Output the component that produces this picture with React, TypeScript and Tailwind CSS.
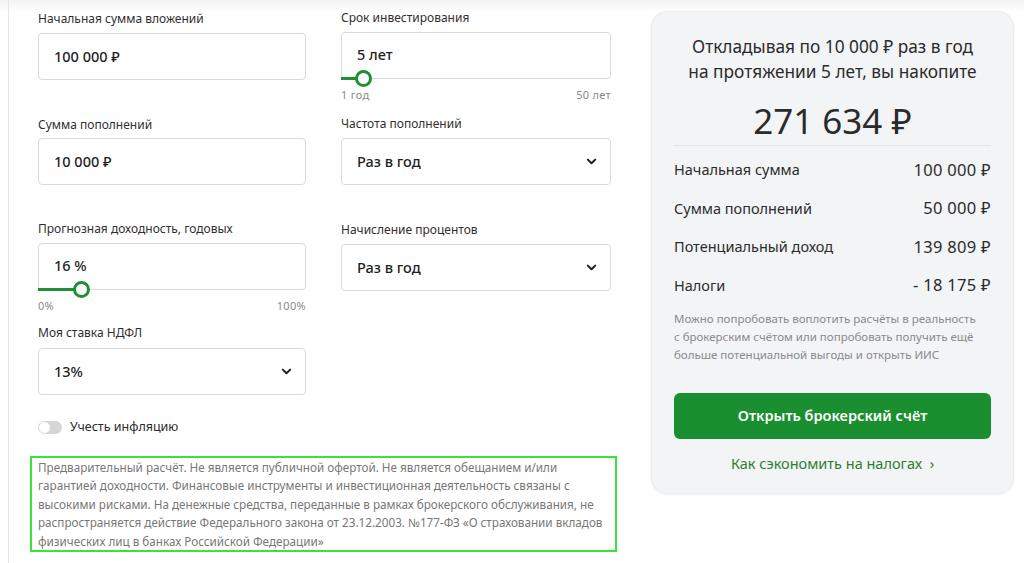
import React from "react";

const Chevron = () => (
  <svg width="11" height="7" viewBox="0 0 11 7" fill="none">
    <path d="M1.8 1.6l3.7 3.7 3.7-3.7" stroke="#1f1f1f" strokeWidth="2" strokeLinecap="round" strokeLinejoin="round" />
  </svg>
);

const Label = ({ children }: { children: React.ReactNode }) => (
  <div className="text-[12px] leading-[16px] text-[#2f2f2f]">{children}</div>
);

const InputBox = ({ value, h = "h-[47px]" }: { value: string; h?: string }) => (
  <div className={`${h} rounded-[4px] border border-[#dadada] bg-white flex items-center pl-[15px] text-[14.5px] font-medium text-[#1f1f1f]`}>
    {value}
  </div>
);

const SelectBox = ({ value, h = "h-[47px]" }: { value: string; h?: string }) => (
  <div className={`${h} rounded-[4px] border border-[#dadada] bg-white flex items-center justify-between pl-[15px] pr-[13px] text-[14.5px] font-medium text-[#1f1f1f]`}>
    <span>{value}</span>
    <Chevron />
  </div>
);

const SliderInput = ({ value, thumb, min, max }: { value: string; thumb: number; min: string; max: string }) => (
  <div>
    <div className="relative h-[47px] rounded-[4px] border border-[#dadada] bg-white flex items-center pl-[15px] pb-[2px] text-[14.5px] font-medium text-[#1f1f1f]">
      {value}
      <div className="absolute left-[-1px] bottom-[-2px] h-[3px] bg-[#1e8f32]" style={{ width: thumb }} />
      <div
        className="absolute bottom-[-9px] w-[17px] h-[17px] rounded-full border-[3px] border-[#1e8f32] bg-white"
        style={{ left: thumb - 9 }}
      />
    </div>
    <div className="flex justify-between text-[11px] leading-[14px] text-[#8a8a8a] mt-[9px] tracking-[0.3px]">
      <span>{min}</span>
      <span>{max}</span>
    </div>
  </div>
);

const Row = ({ label, value }: { label: string; value: string }) => (
  <div className="flex justify-between items-center h-[38.5px]">
    <span className="text-[14.5px] text-[#2b2b2b]">{label}</span>
    <span className="text-[16.5px] text-[#2b2b2b] tracking-[0.3px]">{value}</span>
  </div>
);

export default function App() {
  return (
    <div
      className="w-[1024px] h-[563px] overflow-hidden flex bg-[linear-gradient(to_bottom,#f3f3f3,#ffffff_12px)]"
      style={{ fontFamily: '"Noto Sans", "Open Sans", sans-serif' }}
    >
      <div className="ml-[8px] border-l border-[#e6e6e6] h-full pl-[29px] w-[603px] shrink-0">
        <div className="flex gap-[35px]">
          {/* Column 1 */}
          <div className="w-[268px] flex flex-col">
            <div className="mt-[11px]"><Label>Начальная сумма вложений</Label></div>
            <div className="mt-[6px]"><InputBox value="100 000 ₽" /></div>
            <div className="mt-[37px]"><Label>Сумма пополнений</Label></div>
            <div className="mt-[5px]"><InputBox value="10 000 ₽" /></div>
            <div className="mt-[36px]"><Label>Прогнозная доходность, годовых</Label></div>
            <div className="mt-[6px]">
              <SliderInput value="16 %" thumb={43} min="0%" max="100%" />
            </div>
            <div className="mt-[12px]"><Label>Моя ставка НДФЛ</Label></div>
            <div className="mt-[7px]"><SelectBox value="13%" /></div>
          </div>
          {/* Column 2 */}
          <div className="w-[270px] flex flex-col">
            <div className="mt-[10px]"><Label>Срок инвестирования</Label></div>
            <div className="mt-[6px]">
              <SliderInput value="5 лет" thumb={22} min="1 год" max="50 лет" />
            </div>
            <div className="mt-[14px]"><Label>Частота пополнений</Label></div>
            <div className="mt-[6px]"><SelectBox value="Раз в год" /></div>
            <div className="mt-[37px]"><Label>Начисление процентов</Label></div>
            <div className="mt-[6px]"><SelectBox value="Раз в год" /></div>
          </div>
        </div>
        <div className="flex items-center gap-[8px] mt-[23px]">
          <div className="w-[24px] h-[13px] rounded-full bg-[#d6d6d6] relative">
            <div className="absolute left-[1px] top-[1px] w-[11px] h-[11px] rounded-full bg-white" />
          </div>
          <span className="text-[12.5px] text-[#2b2b2b]">Учесть инфляцию</span>
        </div>
        <div className="mt-[19px] ml-[-8px] w-[587px] border-2 border-[#36e636] px-[6px] pt-[0px] pb-[0px] text-[11.7px] leading-[18.5px] text-[#777]">
          Предварительный расчёт. Не является публичной офертой. Не является обещанием и/или гарантией доходности. Финансовые инструменты и инвестиционная деятельность связаны с высокими рисками. На денежные средства, переданные в рамках брокерского обслуживания, не распространяется действие Федерального закона от 23.12.2003. №177-ФЗ «О страховании вкладов физических лиц в банках Российской Федерации»
        </div>
      </div>

      {/* Right card */}
      <div className="ml-[40px] mt-[11px] w-[363px] h-[483px] rounded-[16px] bg-[#f3f4f6] border border-[#ebebeb] shadow-[0_1px_3px_rgba(0,0,0,0.06)] px-[22px] pt-[22px] flex flex-col">
        <div className="text-center text-[17.3px] leading-[25px] text-[#2b2b2b]">
          Откладывая по 10 000 ₽ раз в год
          <br />
          на протяжении 5 лет, вы накопите
        </div>
        <div className="text-center text-[35px] leading-[44px] mt-[15px] text-[#2b2b2b]">271 634 ₽</div>
        <div className="border-t border-[#e3e3e3] mt-[2px]" />
        <div className="mt-[5px]">
          <Row label="Начальная сумма" value="100 000 ₽" />
          <Row label="Сумма пополнений" value="50 000 ₽" />
          <Row label="Потенциальный доход" value="139 809 ₽" />
          <Row label="Налоги" value="- 18 175 ₽" />
        </div>
        <div className="mt-[5px] text-[11.5px] leading-[18px] text-[#8a8a8a]">
          Можно попробовать воплотить расчёты в реальность
          <br />
          с брокерским счётом или попробовать получить ещё больше потенциальной выгоды и открыть ИИС
        </div>
        <div className="mt-[29px] h-[46px] rounded-[6px] bg-[#1a8f30] flex items-center justify-center text-white text-[14.5px] font-semibold">
          Открыть брокерский счёт
        </div>
        <div className="mt-[14px] text-center text-[14.5px] text-[#2e7d32]">
          Как сэкономить на налогах&nbsp;&nbsp;›
        </div>
      </div>
    </div>
  );
}
